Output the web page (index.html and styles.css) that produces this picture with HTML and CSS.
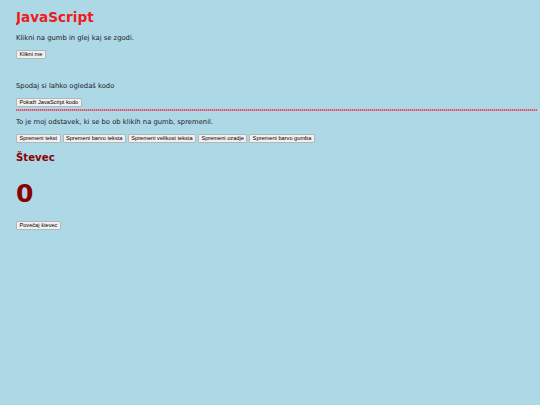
FILE: index.html
```html
<!DOCTYPE html>
<html lang="sl">
<head>
<meta charset="utf-8">
<title>JavaScript</title>
<link rel="stylesheet" href="styles.css">
</head>
<body>
<h1 class="title">JavaScript</h1>
<p class="text">Klikni na gumb in glej kaj se zgodi.</p>
<button class="btn">Klikni me</button>
<p class="text spaced">Spodaj si lahko ogledaš kodo</p>
<button class="btn">Pokaži JavaScript kodo</button>
<div class="divider"></div>
<p class="text">To je moj odstavek, ki se bo ob klikih na gumb, spremenil.</p>
<div class="btn-row">
<button class="btn">Spremeni tekst</button>
<button class="btn">Spremeni barvo teksta</button>
<button class="btn">Spremeni velikost teksta</button>
<button class="btn">Spremeni ozadje</button>
<button class="btn">Spremeni barvo gumba</button>
</div>
<h2 class="subtitle">Števec</h2>
<div class="counter">0</div>
<button class="btn">Povečaj števec</button>
</body>
</html>
```
FILE: styles.css
```css
html {
  background: #add8e6;
}
body {
  margin: 0 3px 0 16px;
  padding-top: 10px;
  font-family: "DejaVu Sans", Verdana, sans-serif;
  font-size: 6.8px;
  line-height: 1.164;
  color: #1a1a1a;
}
.title {
  margin: 0 0 9.5px;
  font-size: 13.6px;
  font-weight: bold;
  color: #ee1c1c;
}
.text {
  margin: 0 0 6.8px;
}
.spaced {
  margin-top: 24px;
}
.btn {
  font-family: "Liberation Sans", Arial, sans-serif;
  font-size: 5.67px;
  line-height: 1.15;
  height: 9.1px;
  padding: 0 2.4px;
  margin: 0;
  color: #000;
  background: #f0f0f0;
  border: 1px solid #b5b5b5;
  border-radius: 1px;
  vertical-align: top;
}
.divider {
  margin: 2.5px 0 8px;
  height: 2px;
  background: repeating-linear-gradient(90deg, #e0506c 0 1px, #c9a2b2 1px 2px);
}
.btn-row {
  display: flex;
  gap: 2px;
}
.subtitle {
  margin: 8.5px 0 16px;
  font-size: 10.2px;
  font-weight: bold;
  color: #8b0000;
}
.counter {
  margin: 0 0 14px;
  font-size: 25px;
  font-weight: bold;
  line-height: 1.1;
  color: #8b0000;
}
```
